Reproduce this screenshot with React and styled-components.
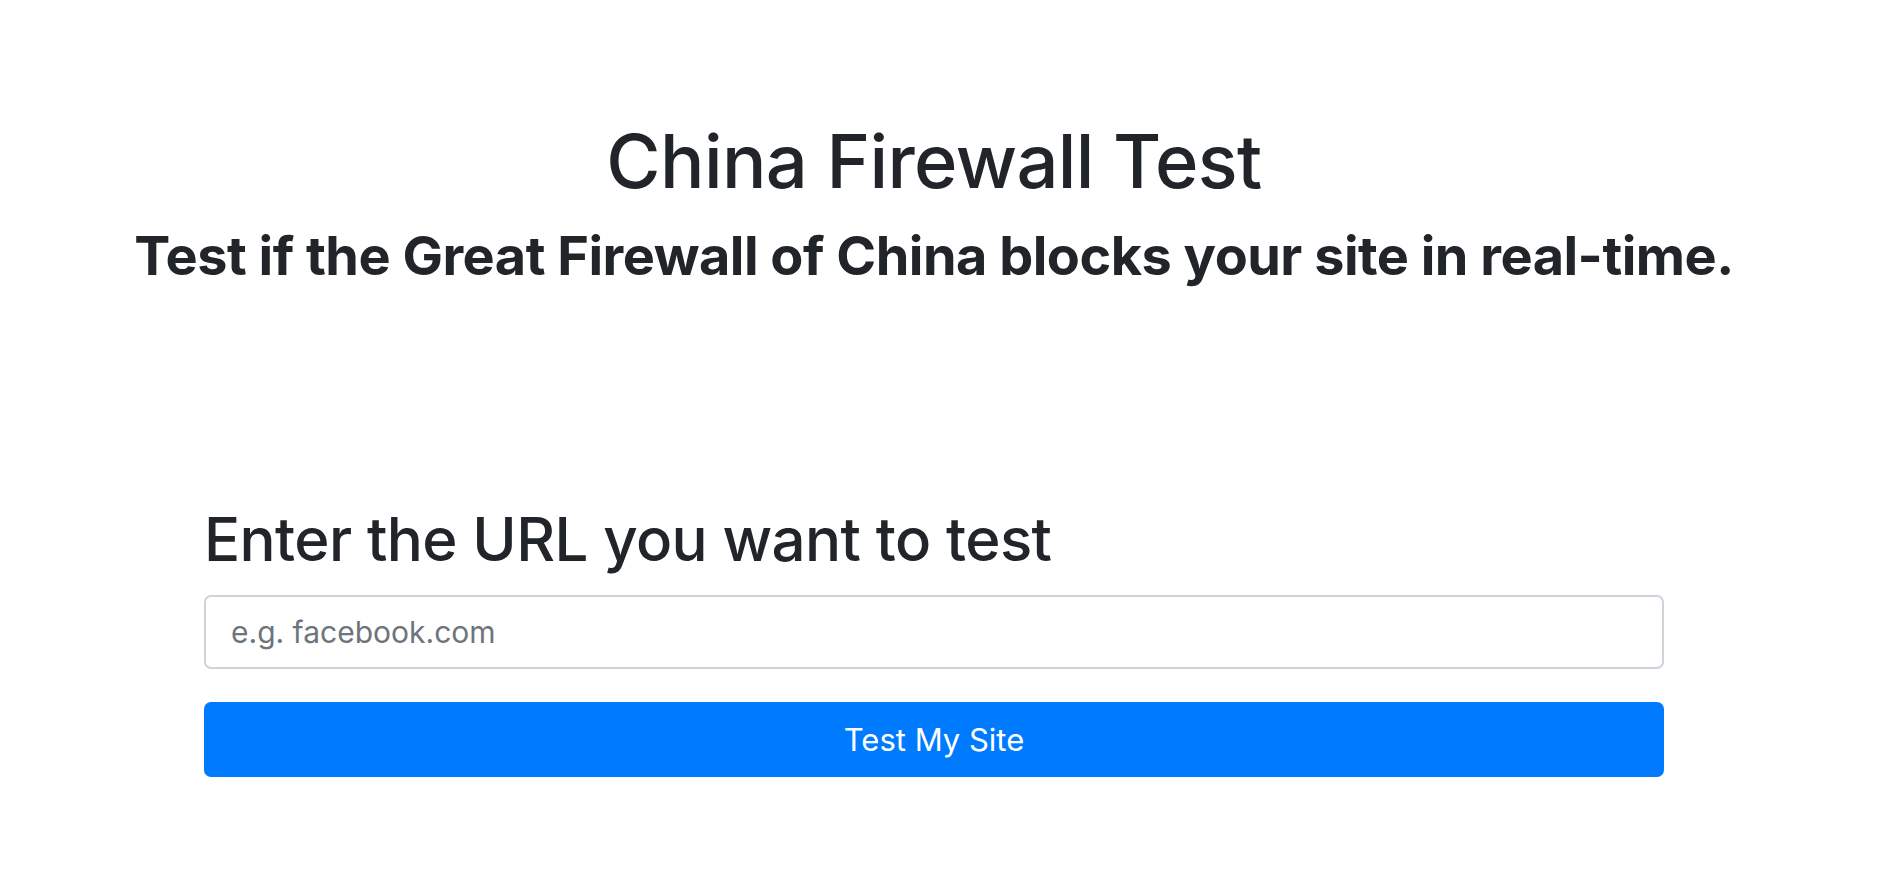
import styled, { createGlobalStyle } from "styled-components";

const GlobalStyle = createGlobalStyle`
  html, body {
    margin: 0;
    padding: 0;
    background: #fff;
  }
  body {
    font-family: Inter, "Noto Sans", "Liberation Sans", sans-serif;
    font-optical-sizing: none;
    color: #212529;
  }
  * {
    box-sizing: border-box;
  }
`;

const Page = styled.div`
  width: 1868px;
  padding-top: 113px;
`;

const Hero = styled.header`
  text-align: center;
`;

const Title = styled.h1`
  margin: 0;
  font-size: 74px;
  font-weight: 450;
  line-height: 96px;
  letter-spacing: -0.6px;
`;

const Subtitle = styled.h2`
  margin: 14px 0 0;
  font-size: 54px;
  font-weight: 700;
  line-height: 66px;
  letter-spacing: -0.5px;
`;

const Form = styled.form`
  width: 1460px;
  margin: 212px auto 0;
  display: flex;
  flex-direction: column;
`;

const Label = styled.label`
  font-size: 60px;
  font-weight: 540;
  line-height: 76px;
  letter-spacing: -0.6px;
  margin-bottom: 18px;
`;

const Input = styled.input`
  height: 74px;
  padding: 0 25px;
  font-family: inherit;
  font-size: 30px;
  color: #495057;
  border: 2px solid #ced4da;
  border-radius: 7px;
  outline: none;
  &::placeholder {
    color: #6c757d;
  }
`;

const Button = styled.button`
  height: 75px;
  margin-top: 33px;
  border: none;
  border-radius: 7px;
  background: #007bff;
  color: #fff;
  font-family: inherit;
  font-size: 31px;
  font-weight: 400;
  cursor: pointer;
`;

export default function App() {
  return (
    <>
      <GlobalStyle />
      <Page>
        <Hero>
          <Title>China Firewall Test</Title>
          <Subtitle>
            Test if the Great Firewall of China blocks your site in real-time.
          </Subtitle>
        </Hero>
        <Form onSubmit={(e) => e.preventDefault()}>
          <Label htmlFor="url">Enter the URL you want to test</Label>
          <Input id="url" type="text" placeholder="e.g. facebook.com" />
          <Button type="submit">Test My Site</Button>
        </Form>
      </Page>
    </>
  );
}
